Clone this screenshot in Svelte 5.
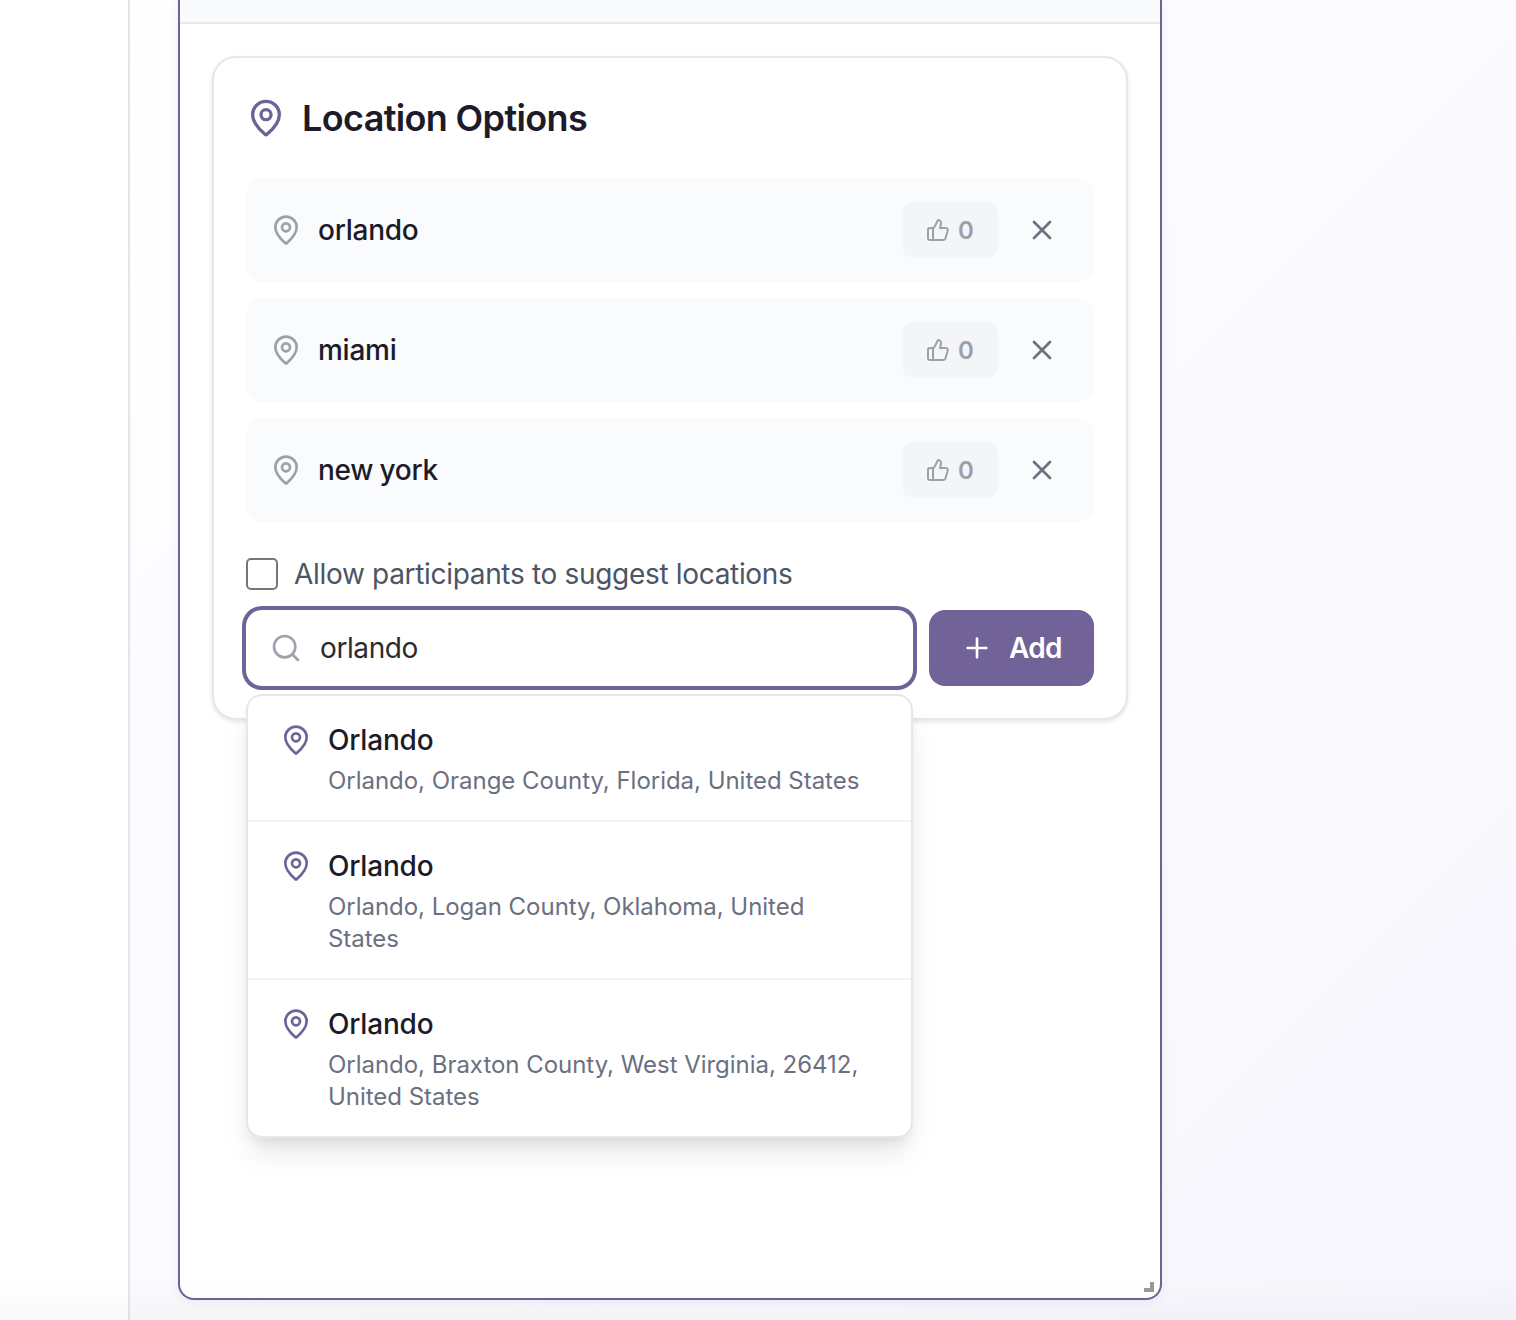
<script>
  let locations = $state([
    { name: 'orlando', votes: 0 },
    { name: 'miami', votes: 0 },
    { name: 'new york', votes: 0 },
  ]);
  let allowSuggestions = $state(false);
  let query = $state('orlando');

  const suggestions = [
    { name: 'Orlando', detail: 'Orlando, Orange County, Florida, United States' },
    { name: 'Orlando', detail: 'Orlando, Logan County, Oklahoma, United States' },
    { name: 'Orlando', detail: 'Orlando, Braxton County, West Virginia, 26412, United States' },
  ];

  function add() {
    if (query.trim()) locations.push({ name: query.trim(), votes: 0 });
  }
</script>

{#snippet pin(cls)}
  <svg class="icon {cls}" viewBox="0 0 24 24" aria-hidden="true">
    <path d="M20 10c0 4.993-5.539 10.193-7.399 11.799a1 1 0 0 1-1.202 0C9.539 20.193 4 14.993 4 10a8 8 0 0 1 16 0" />
    <circle cx="12" cy="10" r="3" />
  </svg>
{/snippet}

<div class="page">
  <aside class="sidebar"></aside>
  <main class="content">
    <div class="panel">
      <div class="panel-head"></div>
      <section class="card">
        <h2>{@render pin('lg')}<span>Location Options</span></h2>

        <ul class="rows">
          {#each locations as loc, i}
            <li class="row">
              {@render pin('muted')}
              <span class="name">{loc.name}</span>
              <button class="vote" onclick={() => loc.votes++}>
                <svg class="icon sm" viewBox="0 0 24 24" aria-hidden="true">
                  <path d="M7 10v12" />
                  <path d="M15 5.88 14 10h5.83a2 2 0 0 1 1.92 2.56l-2.33 8A2 2 0 0 1 17.5 22H4a2 2 0 0 1-2-2v-8a2 2 0 0 1 2-2h2.76a2 2 0 0 0 1.79-1.11L12 2a3.13 3.13 0 0 1 3 3.88Z" />
                </svg>
                <span>{loc.votes}</span>
              </button>
              <button class="remove" aria-label="Remove" onclick={() => locations.splice(i, 1)}>
                <svg class="icon" viewBox="0 0 24 24" aria-hidden="true"><path d="M18 6 6 18M6 6l12 12" /></svg>
              </button>
            </li>
          {/each}
        </ul>

        <label class="allow">
          <input type="checkbox" bind:checked={allowSuggestions} />
          <span>Allow participants to suggest locations</span>
        </label>

        <div class="add-row">
          <div class="search">
            <svg class="icon" viewBox="0 0 24 24" aria-hidden="true">
              <circle cx="11" cy="11" r="8" /><path d="m21 21-4.3-4.3" />
            </svg>
            <input type="text" bind:value={query} spellcheck="false" />
            <ul class="menu">
              {#each suggestions as s}
                <li>
                  {@render pin('accent')}
                  <div>
                    <div class="title">{s.name}</div>
                    <div class="detail">{s.detail}</div>
                  </div>
                </li>
              {/each}
            </ul>
          </div>
          <button class="add" onclick={add}>
            <svg class="icon" viewBox="0 0 24 24" aria-hidden="true"><path d="M5 12h14M12 5v14" /></svg>
            <span>Add</span>
          </button>
        </div>
      </section>
      <span class="grip"></span>
    </div>
  </main>
  <div class="fade"></div>
</div>

<style>
  :global(body) { margin: 0; background: #fff; }
  * { box-sizing: border-box; }
  .page {
    position: relative;
    display: flex;
    height: 1320px;
    overflow: hidden;
    font-family: Inter, 'Liberation Sans', sans-serif;
    color: #1d1b2a;
    font-size: 28px;
  }
  button, input { font: inherit; margin: 0; }
  button { border: 0; padding: 0; cursor: pointer; }
  ul { list-style: none; margin: 0; padding: 0; }
  .icon {
    width: 32px;
    height: 32px;
    flex: none;
    display: block;
    fill: none;
    stroke: currentColor;
    stroke-width: 2;
    stroke-linecap: round;
    stroke-linejoin: round;
  }
  .icon.lg { width: 40px; height: 40px; color: #6f6299; }
  .icon.sm { width: 24px; height: 24px; }
  .icon.muted { color: #9ca0a8; }
  .icon.accent { color: #6f6299; margin-top: 4px; }

  .sidebar { width: 130px; flex: none; border-right: 2px solid #e5e5e9; background: #fff; }
  .content {
    flex: 1;
    padding: 0 354px 20px 48px;
    background: linear-gradient(135deg, #fefeff 0%, #fbfbfe 50%, #f7f6fd 100%);
  }
  .panel {
    position: relative;
    height: 1300px;
    border: 2px solid #6f6299;
    border-top: 0;
    border-radius: 0 0 16px 16px;
    background: #fff;
    box-shadow: 0 2px 10px rgba(111, 98, 153, 0.1);
  }
  .panel-head { height: 24px; background: #f9fafc; border-bottom: 2px solid #e5e7e9; }
  .card {
    margin: 32px;
    height: 664px;
    padding: 32px;
    border: 2px solid #e6e7e9;
    border-radius: 24px;
    background: #fff;
    box-shadow: 0 2px 4px rgba(0, 0, 0, 0.1);
  }
  h2 {
    display: flex;
    align-items: center;
    gap: 16px;
    height: 56px;
    margin: 0 0 32px;
    font-size: 36px;
    font-weight: 600;
    letter-spacing: -0.65px;
  }
  .rows { display: flex; flex-direction: column; gap: 16px; margin-bottom: 32px; }
  .row {
    display: flex;
    align-items: center;
    height: 104px;
    padding: 0 24px;
    border-radius: 16px;
    background: #f9fbfc;
  }
  .name {
    flex: 1;
    margin-left: 16px;
    font-weight: 500;
    letter-spacing: -0.25px;
    word-spacing: -1px;
  }
  .vote {
    display: flex;
    align-items: center;
    gap: 8px;
    width: 96px;
    height: 56px;
    padding: 0 24px;
    border-radius: 12px;
    background: #f4f5f7;
    color: #9ca0a8;
    font-size: 24px;
    font-weight: 600;
  }
  .remove { padding: 12px; margin-left: 16px; background: none; color: #6b7280; }
  .allow {
    display: flex;
    align-items: center;
    gap: 16px;
    height: 40px;
    margin-bottom: 16px;
    color: #4b5563;
    letter-spacing: -0.32px;
  }
  .allow input {
    appearance: none;
    width: 32px;
    height: 32px;
    border: 2px solid #767676;
    border-radius: 5px;
    background: #fff;
  }
  .allow input:checked { background: #6f6299; }
  .add-row { display: flex; gap: 16px; height: 76px; }
  .search {
    position: relative;
    flex: 1;
    display: flex;
    align-items: center;
    padding-left: 24px;
    border-radius: 16px;
    background: #fff;
    color: #9ca3af;
    box-shadow: 0 0 0 4px #6f6299;
  }
  .search input {
    flex: 1;
    min-width: 0;
    margin-left: 16px;
    padding: 0 24px 0 2px;
    border: 0;
    outline: 0;
    background: none;
    color: #2b2b2e;
    letter-spacing: -0.4px;
  }
  .menu {
    position: absolute;
    top: 84px;
    left: 0;
    right: 0;
    border: 2px solid #e5e7e9;
    border-radius: 16px;
    background: #fff;
    box-shadow: 0 20px 30px -6px rgba(0, 0, 0, 0.1), 0 8px 12px -4px rgba(0, 0, 0, 0.08);
  }
  .menu li { display: flex; gap: 16px; padding: 24px 32px; }
  .menu li + li { border-top: 2px solid #f3f4f6; }
  .title {
    height: 40px;
    line-height: 40px;
    font-weight: 500;
    letter-spacing: -0.2px;
    color: #1d1b2a;
  }
  .detail {
    margin: 5px 0 -1px;
    font-size: 24px;
    line-height: 32px;
    color: #6b7080;
    letter-spacing: -0.03px;
  }
  .add {
    display: flex;
    align-items: center;
    gap: 16px;
    width: 165px;
    padding: 0 32px;
    border-radius: 16px;
    background: #716298;
    color: #fff;
    font-weight: 600;
    letter-spacing: -0.7px;
  }
  .grip {
    position: absolute;
    right: 6px;
    bottom: 6px;
    width: 10px;
    height: 10px;
    border: solid #999;
    border-width: 0 4px 4px 0;
  }
  .fade {
    position: absolute;
    left: 0;
    right: 0;
    bottom: 0;
    height: 44px;
    background: linear-gradient(rgba(0, 0, 0, 0), rgba(0, 0, 0, 0.025));
    pointer-events: none;
  }
</style>
